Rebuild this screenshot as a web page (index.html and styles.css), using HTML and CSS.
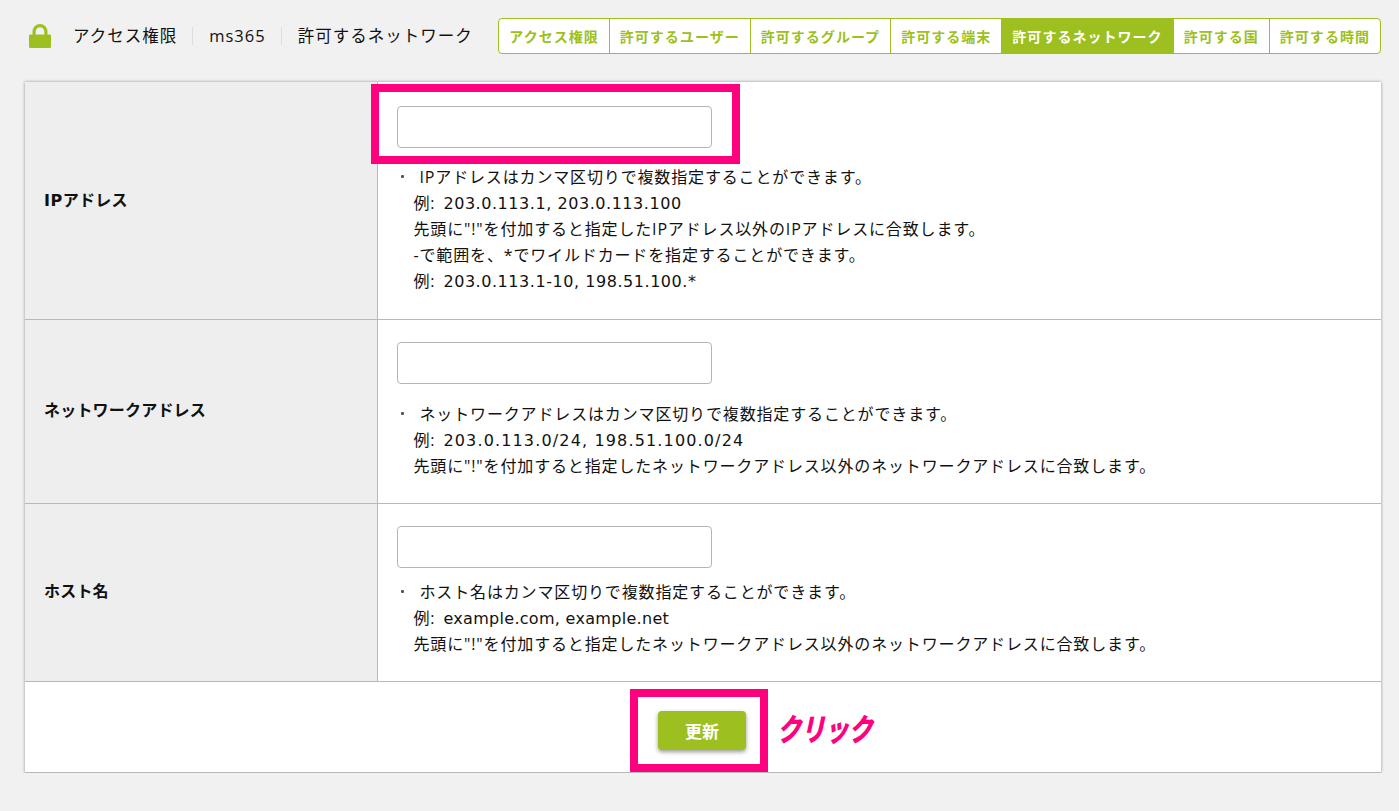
FILE: index.html
```html
<!DOCTYPE html>
<html lang="ja">
<head>
    <meta charset="UTF-8">
    <title>許可するネットワーク</title>
    <link rel="stylesheet" href="styles.css">
</head>
<body>

    <div class="header">
        <div class="crumbs">
            <svg class="lock" width="22" height="24" viewBox="0 0 22 24">
                <path d="M3.500 11V7.500a7.500 7.500 0 0 1 15 0V11h-3.200V7.500a4.300 4.300 0 0 0-8.600 0V11z" fill="#9dbf20"/>
                <path d="M1.200 10.500h19.600a1.200 1.200 0 0 1 1.200 1.200v11.100a1.200 1.200 0 0 1-1.200 1.200h-19.600a1.200 1.200 0 0 1-1.200-1.200v-11.100a1.200 1.200 0 0 1 1.200-1.200z" fill="#9dbf20"/>
            </svg>
            <span class="crumb">アクセス権限</span>
            <span class="crumb">ms365</span>
            <span class="crumb">許可するネットワーク</span>
        </div>
        <div class="tabs">
            <a class="tab">アクセス権限</a>
            <a class="tab">許可するユーザー</a>
            <a class="tab">許可するグループ</a>
            <a class="tab">許可する端末</a>
            <a class="tab active">許可するネットワーク</a>
            <a class="tab">許可する国</a>
            <a class="tab">許可する時間</a>
        </div>
    </div>

    <div class="card">
        <table class="form">
            <tr class="row-ip">
                <th><span class="latin">IP</span>アドレス</th>
                <td>
                    <input class="field" type="text">
                    <ul class="notes">
                        <li>IPアドレスはカンマ区切りで複数指定することができます。<br>例: <span class="latin">203.0.113.1, 203.0.113.100</span><br>先頭に"!"を付加すると指定したIPアドレス以外のIPアドレスに合致します。<br>-で範囲を、*でワイルドカードを指定することができます。<br>例: <span class="latin">203.0.113.1-10, 198.51.100.*</span></li>
                    </ul>
                </td>
            </tr>
            <tr>
                <th>ネットワークアドレス</th>
                <td>
                    <input class="field" type="text">
                    <ul class="notes">
                        <li>ネットワークアドレスはカンマ区切りで複数指定することができます。<br>例: <span class="latin cidr">203.0.113.0/24, 198.51.100.0/24</span><br>先頭に"!"を付加すると指定したネットワークアドレス以外のネットワークアドレスに合致します。</li>
                    </ul>
                </td>
            </tr>
            <tr class="row-host">
                <th>ホスト名</th>
                <td>
                    <input class="field" type="text">
                    <ul class="notes">
                        <li>ホスト名はカンマ区切りで複数指定することができます。<br>例: <span class="latin domain">example.com, example.net</span><br>先頭に"!"を付加すると指定したネットワークアドレス以外のネットワークアドレスに合致します。</li>
                    </ul>
                </td>
            </tr>
        </table>
        <div class="actions">
            <button class="submit">更新</button>
        </div>

        <!-- annotations drawn over the screenshot -->
        <div class="mark mark-input"></div>
        <div class="mark mark-submit"></div>
        <div class="click-note">クリック</div>
    </div>

</body>
</html>
```

FILE: styles.css
```css
body {
    margin: 0;
    background-color: #f1f1f1;
    color: #111;
    font-family: "Open Sans", "Noto Sans CJK JP", sans-serif;
    font-size: 16px;
    letter-spacing: 0.05em;
}

.latin {
    font-family: "DejaVu Sans", sans-serif;
    line-height: 1;
    letter-spacing: 0.55px;
}

.latin.cidr {
    letter-spacing: 1.15px;
}

.latin.domain {
    letter-spacing: 0.3px;
}

.notes .latin {
    margin-left: 3px;
}

.header {
    display: flex;
    justify-content: space-between;
    align-items: center;
    height: 36px;
    padding: 18px 18px 0 29px;
    margin-bottom: 28px;
}

.crumbs {
    display: flex;
    align-items: center;
}

.lock {
    margin-right: 22px;
}

.crumb {
    font-size: 16.500px;
    letter-spacing: 1px;
    line-height: 18px;
    padding-right: 15px;
    margin-right: 16px;
    border-right: 1px solid #ddd;
}

.crumb:last-child {
    padding-right: 0;
    margin-right: 0;
    border-right: none;
}

.tabs {
    display: flex;
    height: 36px;
    border: 1px solid #9dbf20;
    border-radius: 4px;
    background-color: white;
    box-sizing: border-box;
}

.tab {
    display: flex;
    align-items: center;
    padding: 0 10px;
    border-left: 1px solid #9dbf20;
    color: #9dbf20;
    font-size: 14px;
    font-weight: bold;
    letter-spacing: 1.03px;
}

.tab:first-child {
    border-left: none;
}

.tab.active {
    background-color: #9dbf20;
    color: white;
}

.card {
    position: relative;
    width: 1356px;
    margin-left: 25px;
    background-color: white;
    box-shadow: 0 0 3px rgba(0, 0, 0, 0.4);
}

.form {
    width: 100%;
    border-collapse: collapse;
}

.form th {
    width: 352px;
    box-sizing: border-box;
    padding: 0 19px 6px;
    background-color: #eee;
    border-bottom: 1px solid #b5b9bc;
    border-right: 1px solid #b5b9bc;
    text-align: left;
    font-size: 16px;
    letter-spacing: 0.2px;
}

.form td {
    padding: 22px 19px 24px;
    border-bottom: 1px solid #b5b9bc;
}

.row-ip th {
    padding-bottom: 3px;
}

.row-ip td {
    padding-top: 24px;
    padding-bottom: 25px;
}

.field {
    display: block;
    width: 315px;
    height: 42px;
    box-sizing: border-box;
    border: 1px solid #b5b5b5;
    border-radius: 4px;
    background-color: white;
}

.notes {
    margin: 17px 0 0;
    padding: 0 0 0 17px;
    line-height: 26px;
    letter-spacing: 0.85px;
    list-style: none;
}

.row-ip .notes {
    margin-top: 16px;
}

.row-host .notes {
    margin-top: 11px;
}

.notes li {
    position: relative;
    text-indent: 6px;
}

.notes li:before {
    content: "";
    position: absolute;
    left: -13px;
    top: 11px;
    width: 3px;
    height: 3px;
    background-color: #555;
    border-radius: 1px;
}

.actions {
    display: flex;
    justify-content: center;
    padding: 29px 2px 22px 0;
    border-bottom: 1px solid #b5b9bc;
}

.submit {
    width: 88px;
    height: 39px;
    border: none;
    border-radius: 4px;
    background-color: #9dbf20;
    box-shadow: 0 2px 4px rgba(0, 0, 0, 0.4);
    color: white;
    font-family: inherit;
    font-size: 17px;
    font-weight: bold;
}

.mark {
    position: absolute;
    box-sizing: border-box;
    border: 8px solid #ff007f;
}

.mark-input {
    left: 346px;
    top: 2px;
    width: 369px;
    height: 80px;
}

.mark-submit {
    left: 605px;
    top: 607px;
    width: 138px;
    height: 83px;
}

.click-note {
    position: absolute;
    left: 755px;
    top: 628px;
    color: #ff007f;
    font-size: 24px;
    font-weight: 900;
    letter-spacing: -0.01em;
    transform: skewX(-12deg) scaleY(1.3);
}
```
